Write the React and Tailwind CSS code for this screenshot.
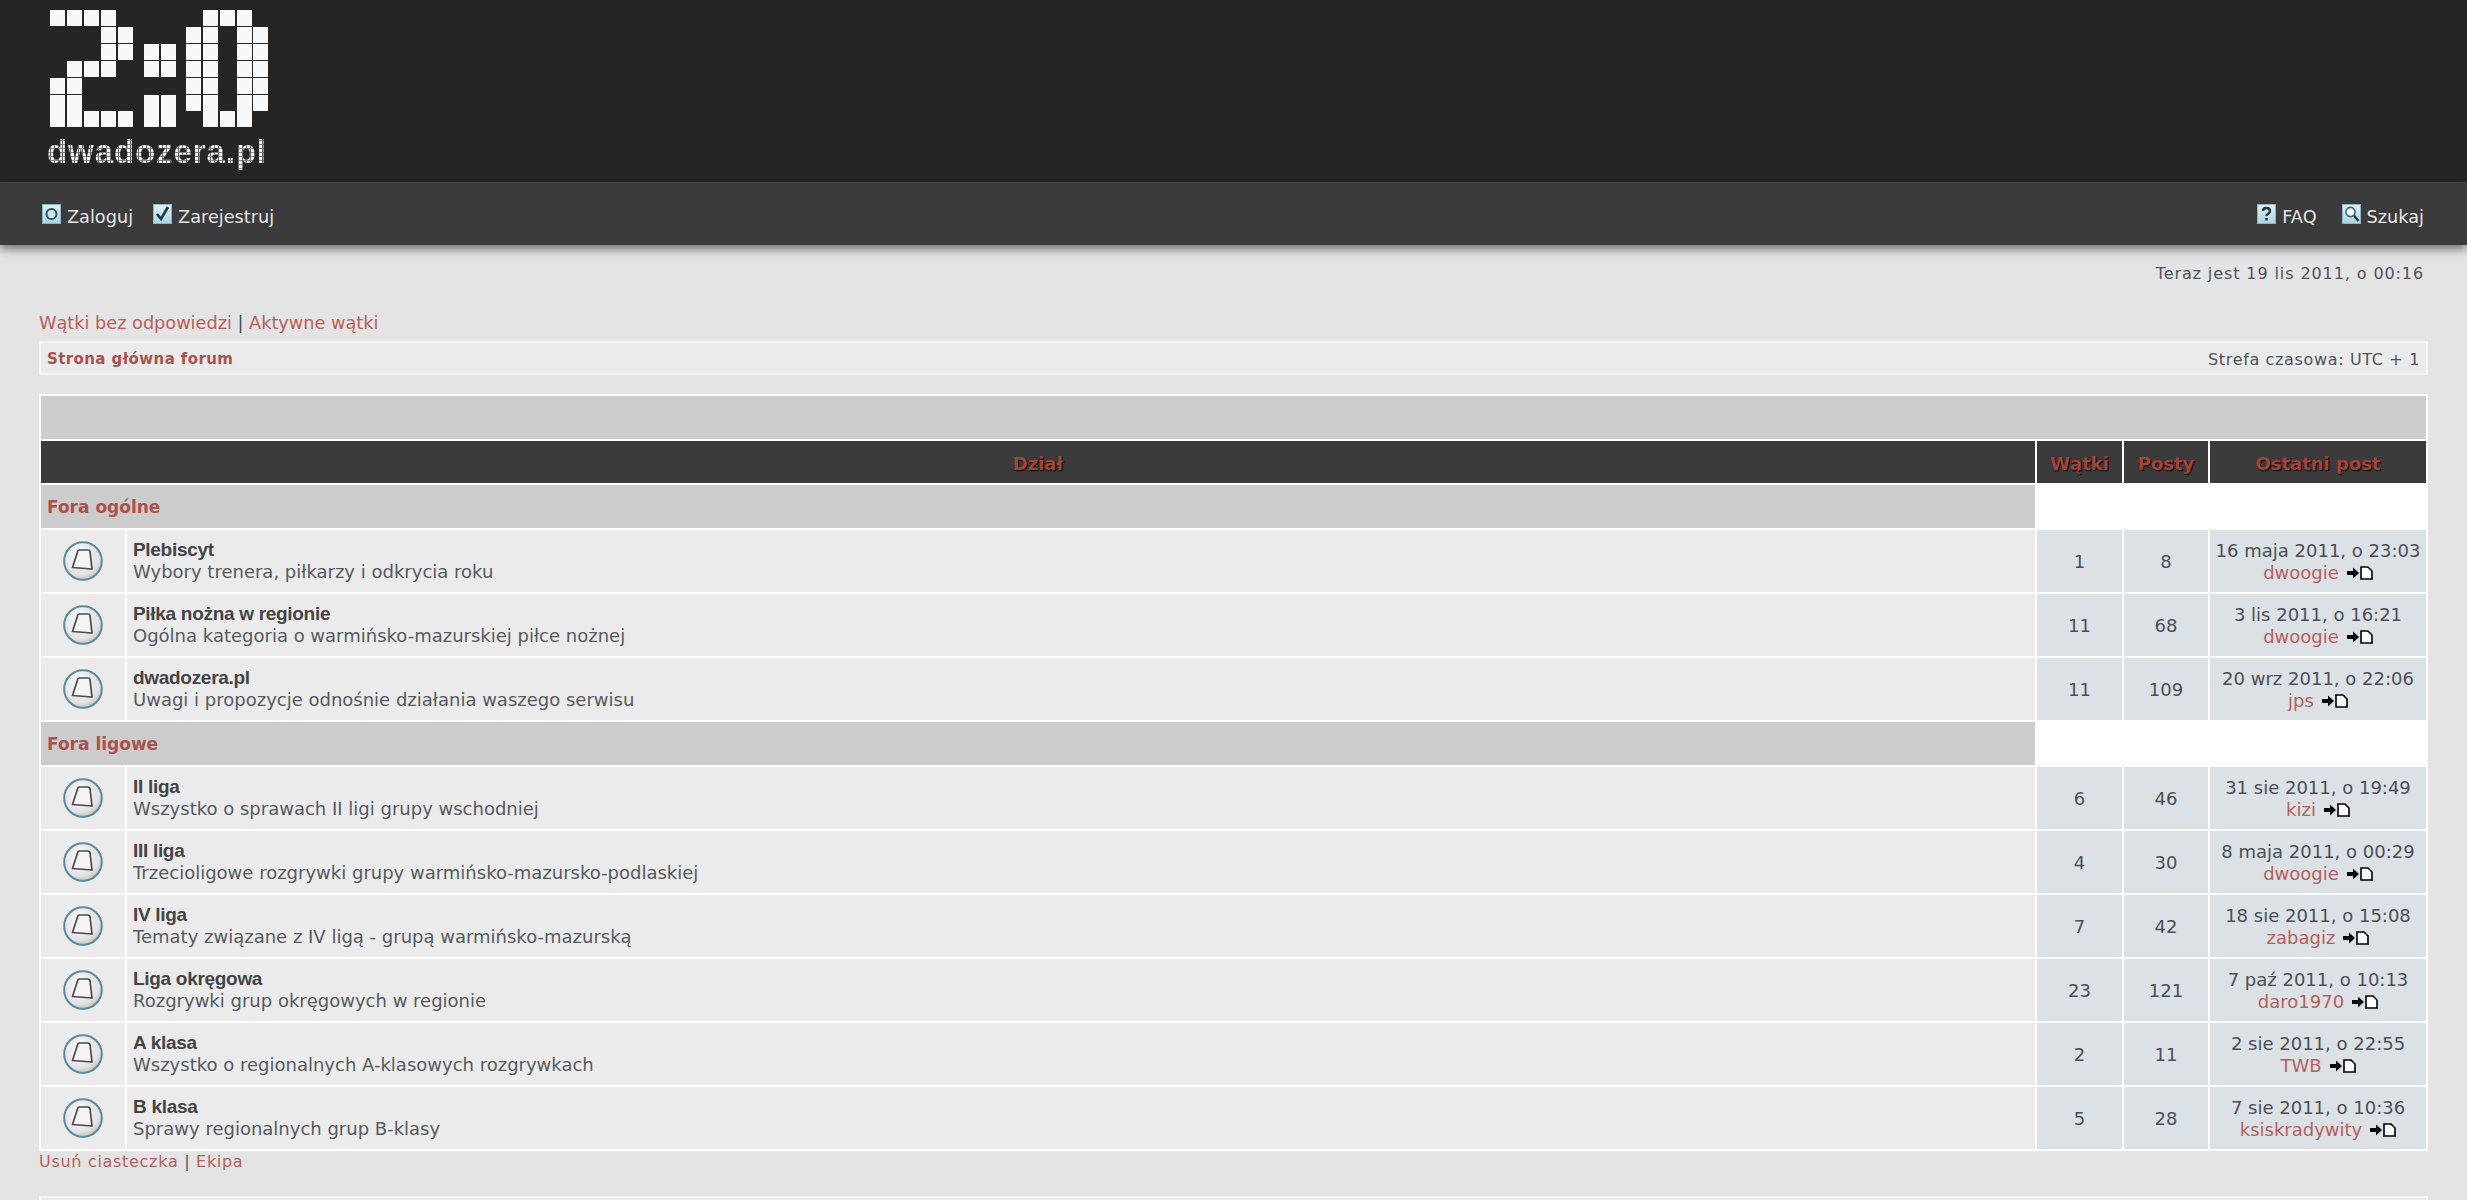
import React from "react";

const FONT = "font-['DejaVu_Sans',Verdana,sans-serif]";

const LOGO_ROWS = [10, 27, 44, 61, 78, 95, 111];
const LOGO_COLS = [50, 67, 84, 101, 118, 144, 161, 186, 203, 220, 237, 253];
// rows of the 2:0 logo, one string per pixel row
const LOGO = [
  "11110" + "00" + "01110",
  "00011" + "00" + "11011",
  "00011" + "11" + "11011",
  "01110" + "11" + "11011",
  "11000" + "00" + "11011",
  "11000" + "11" + "11011",
  "11111" + "11" + "01110",
];

const Logo = () => (
  <div className="w-[300px] h-[182px]">
    <svg width="300" height="132" className="block">
      {LOGO.map((row, r) =>
        row.split("").map((c, i) =>
          c === "1" ? (
            <rect key={r + "-" + i} x={LOGO_COLS[i]} y={LOGO_ROWS[r]} width="15" height="16" fill="#f8f8f8" />
          ) : null
        )
      )}
    </svg>
    <div className="ml-[47px] mt-[2px] w-[232px] h-[38px] font-['Liberation_Sans'] font-bold text-[33px] leading-[36px] tracking-[0.9px] text-transparent bg-clip-text bg-[repeating-linear-gradient(90deg,transparent_0_3px,#666_3px_4px),repeating-linear-gradient(0deg,#f4f4f4_0_3px,#888_3px_4px)]">
      dwadozera.pl
    </div>
  </div>
);

const NavIcon = ({ children }) => (
  <svg width="19" height="20" viewBox="0 0 19 20" className="block">
    <defs>
      <linearGradient id="navbox" x1="0" y1="0" x2="0" y2="1">
        <stop offset="0" stopColor="#e4f2f6" />
        <stop offset="1" stopColor="#a9d3e2" />
      </linearGradient>
    </defs>
    <rect x="0.5" y="0.5" width="18" height="19" fill="url(#navbox)" stroke="#8fb6c4" />
    {children}
  </svg>
);

const NavLink = ({ icon, label }) => (
  <a className="flex items-center gap-[6px] text-[17.7px] text-[#e6e6e6]">
    <NavIcon>{icon}</NavIcon>
    <span className="mt-[6px]">{label}</span>
  </a>
);

const LoginGlyph = (
  <>
    <circle cx="9.5" cy="10" r="5" fill="none" stroke="#2d4f5e" strokeWidth="2" />
    <path d="M7 14 L12 14 L9.5 11 Z" fill="#dff0f5" />
  </>
);
const CheckGlyph = <path d="M4 10 L8 15 L15 3" fill="none" stroke="#1d3a4a" strokeWidth="2.6" />;
const FaqGlyph = (
  <path d="M6 7 C6 3 13 3 13 7 C13 10 9.5 9.5 9.5 12 M9.5 14 V16.5" fill="none" stroke="#20323d" strokeWidth="2.4" />
);
const SearchGlyph = (
  <>
    <circle cx="8.5" cy="8" r="4.6" fill="#f2fafc" stroke="#3b5f70" strokeWidth="1.6" />
    <path d="M12 11.5 L16.5 17" stroke="#1f3a48" strokeWidth="2.2" />
  </>
);

const ForumIcon = () => (
  <svg width="40" height="40" viewBox="0 0 40 40" className="block mx-auto">
    <defs>
      <radialGradient id="forumdisc" cx="0.4" cy="0.35" r="0.75">
        <stop offset="0" stopColor="#f8f8f8" />
        <stop offset="0.7" stopColor="#e2e2e2" />
        <stop offset="1" stopColor="#b5b5b5" />
      </radialGradient>
    </defs>
    <circle cx="20" cy="20" r="18.8" fill="url(#forumdisc)" stroke="#5b8a9e" strokeWidth="2" />
    <path d="M15 9.5 Q15.5 9 16.5 9 H25 Q26.8 9 27 10.5 L29 28 L9.5 26.5 Z" fill="#f4f4f4" stroke="#4a4a4a" strokeWidth="1.7" strokeLinejoin="round" />
  </svg>
);

const PostIcon = () => (
  <svg width="26" height="14" viewBox="0 0 26 14" className="inline-block ml-[8px] align-[-1px]">
    <path d="M0 5 H6 V1.5 L12 7 L6 12.5 V9 H0 Z" fill="#000" />
    <path d="M14 1 H21 L25 5 V13 H14 Z" fill="#fff" stroke="#000" strokeWidth="1.6" />
  </svg>
);

const OGOLNE = [
  ["Plebiscyt", "Wybory trenera, piłkarzy i odkrycia roku", "1", "8", "16 maja 2011, o 23:03", "dwoogie"],
  ["Piłka nożna w regionie", "Ogólna kategoria o warmińsko-mazurskiej piłce nożnej", "11", "68", "3 lis 2011, o 16:21", "dwoogie"],
  ["dwadozera.pl", "Uwagi i propozycje odnośnie działania waszego serwisu", "11", "109", "20 wrz 2011, o 22:06", "jps"],
];

const LIGOWE = [
  ["II liga", "Wszystko o sprawach II ligi grupy wschodniej", "6", "46", "31 sie 2011, o 19:49", "kizi"],
  ["III liga", "Trzecioligowe rozgrywki grupy warmińsko-mazursko-podlaskiej", "4", "30", "8 maja 2011, o 00:29", "dwoogie"],
  ["IV liga", "Tematy związane z IV ligą - grupą warmińsko-mazurską", "7", "42", "18 sie 2011, o 15:08", "zabagiz"],
  ["Liga okręgowa", "Rozgrywki grup okręgowych w regionie", "23", "121", "7 paź 2011, o 10:13", "daro1970"],
  ["A klasa", "Wszystko o regionalnych A-klasowych rozgrywkach", "2", "11", "2 sie 2011, o 22:55", "TWB"],
  ["B klasa", "Sprawy regionalnych grup B-klasy", "5", "28", "7 sie 2011, o 10:36", "ksiskradywity"],
];

const HeadCell = ({ children, colSpan }) => (
  <th
    colSpan={colSpan}
    className="p-0 pt-[2px] bg-[#3a3b3a] text-center text-[18px] font-bold text-[#a5443a] [text-shadow:1px_1px_1px_#000]"
  >
    {children}
  </th>
);

const CategoryRow = ({ name }) => (
  <tr className="h-[43px]">
    <td colSpan={2} className="p-0 pl-[6px] pt-[3px] bg-[#cccccc] text-[17px] font-bold text-[#a9524e]">
      {name}
    </td>
    <td colSpan={3} className="p-0" />
  </tr>
);

const ForumRow = ({ forum }) => {
  const [title, desc, topics, posts, date, author] = forum;
  return (
    <tr className="h-[62px]">
      <td className="p-0 bg-[#ebebeb]">
        <ForumIcon />
      </td>
      <td className="p-0 pl-[6px] bg-[#ebebeb]">
        <div className="font-['Liberation_Sans'] font-bold text-[19px] leading-[21px] tracking-[-0.3px] text-[#444444]">{title}</div>
        <div className="text-[18px] leading-[23px] text-[#555a60]">{desc}</div>
      </td>
      <td className="p-0 pt-[1px] bg-[#dce1e5] text-center text-[18px] text-[#4a4f57]">{topics}</td>
      <td className="p-0 pt-[1px] bg-[#dce1e5] text-center text-[18px] text-[#4a4f57]">{posts}</td>
      <td className="p-0 pt-[1px] bg-[#dce1e5] text-center text-[18px] leading-[22px] text-[#4a4f57] whitespace-nowrap">
        <div>{date}</div>
        <div>
          <a className="text-[#b5605c]">{author}</a>
          <PostIcon />
        </div>
      </td>
    </tr>
  );
};

export default function App() {
  return (
    <div className={"min-h-screen bg-[#e4e4e4] overflow-hidden " + FONT}>
      <header className="bg-[#262524] h-[182px]">
        <Logo />
      </header>
      <nav className="h-[63px] bg-[#3a3b3a] border-t border-[#444545] flex items-center justify-between pl-[42px] pr-[43px] shadow-[0_4px_9px_rgba(0,0,0,0.5)]">
        <div className="flex gap-[20px]">
          <NavLink icon={LoginGlyph} label="Zaloguj" />
          <NavLink icon={CheckGlyph} label="Zarejestruj" />
        </div>
        <div className="flex gap-[25px]">
          <NavLink icon={FaqGlyph} label="FAQ" />
          <NavLink icon={SearchGlyph} label="Szukaj" />
        </div>
      </nav>

      <main className="px-[39px]">
        <p className="mt-[19px] pr-[4px] text-right text-[16px] leading-[20px] tracking-[0.9px] text-[#4d525c]">
          Teraz jest 19 lis 2011, o 00:16
        </p>
        <p className="mt-[29px] text-[17.7px] leading-[20px] text-[#b5605c]">
          Wątki bez odpowiedzi <span className="text-[#4a4f57]">|</span> Aktywne wątki
        </p>
        <div className="mt-[8px] h-[34px] border-2 border-[#f5f5f5] bg-[#ebebeb] flex items-center justify-between px-[6px] pt-[3px] text-[15px]">
          <a className="font-bold tracking-[0.4px] text-[#a9524e]">Strona główna forum</a>
          <span className="text-[16px] tracking-[0.65px] text-[#4d525c]">Strefa czasowa: UTC + 1</span>
        </div>

        <table className="mt-[19px] w-[2389px] table-fixed border-separate border-spacing-[2px] bg-white">
          <colgroup>
            <col className="w-[84px]" />
            <col className="w-[1908px]" />
            <col className="w-[85px]" />
            <col className="w-[84px]" />
            <col className="w-[216px]" />
          </colgroup>
          <tbody>
            <tr className="h-[43px]">
              <td colSpan={5} className="p-0 bg-[#cccccc]" />
            </tr>
            <tr className="h-[42px]">
              <HeadCell colSpan={2}>Dział</HeadCell>
              <HeadCell>Wątki</HeadCell>
              <HeadCell>Posty</HeadCell>
              <HeadCell>Ostatni post</HeadCell>
            </tr>
            <CategoryRow name="Fora ogólne" />
            {OGOLNE.map((f) => (
              <ForumRow key={f[0]} forum={f} />
            ))}
            <CategoryRow name="Fora ligowe" />
            {LIGOWE.map((f) => (
              <ForumRow key={f[0]} forum={f} />
            ))}
          </tbody>
        </table>

        <p className="mt-[1px] text-[16px] leading-[20px] tracking-[0.7px] text-[#b5605c]">
          Usuń ciasteczka <span className="text-[#4a4f57]">|</span> Ekipa
        </p>
        <div className="mt-[24px] h-[6px] border-t-2 border-x-2 border-[#f5f5f5] bg-[#ebebeb]" />
      </main>
    </div>
  );
}
